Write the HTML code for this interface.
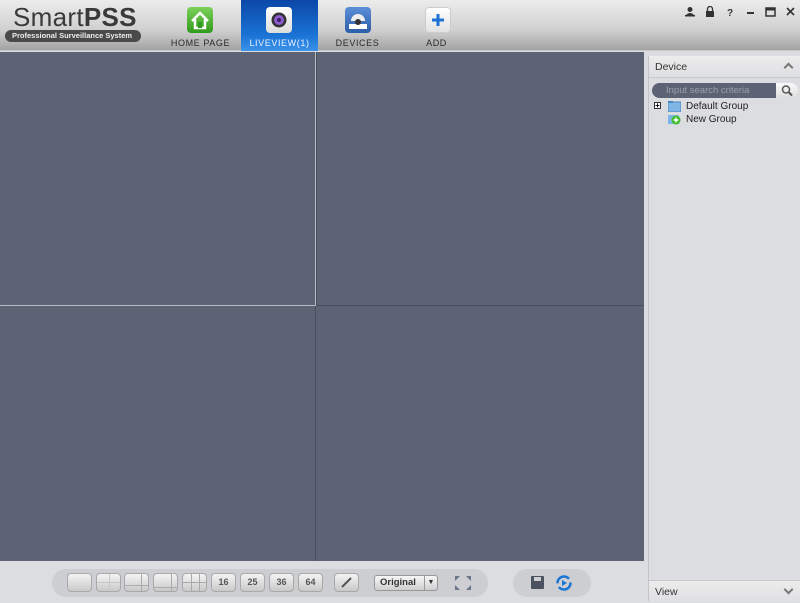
<!DOCTYPE html>
<html><head><meta charset="utf-8"><style>
*{margin:0;padding:0;box-sizing:border-box}
body{width:800px;height:601px;overflow:hidden;background:#dcdde0;font-family:"Liberation Sans","DejaVu Sans",sans-serif;position:relative}
.hdr{position:absolute;left:0;top:0;width:800px;height:51px;background:linear-gradient(#ececec,#d0d0d0 60%,#a2a2a2);border-bottom:1px solid #c8c8c8}
.logo{position:absolute;left:13px;top:2px;font-size:26px;color:#3a3a3a;letter-spacing:0.3px}
.logo b{font-weight:bold}
.badge{position:absolute;left:5px;top:30px;width:136px;height:12px;border-radius:6px;background:#4a4a4a;color:#eee;font-size:7.5px;font-weight:bold;line-height:12px;padding-left:7px}
.tab{position:absolute;top:0;height:51px;width:77px;text-align:center;font-size:9px;letter-spacing:0.6px;color:#2a2a2a}
.tab .lbl{position:absolute;left:0;right:0;top:38px}
.tab .ic{position:absolute;left:26px;top:7px;width:26px;height:26px;border-radius:4px}
.sel{background:linear-gradient(#0b47a8,#1b74d6 70%,#3d93ea);color:#e8f2ff}
.vid{position:absolute;left:0;top:52px;width:644px;height:509px;background:#5b6374}
.cell1{position:absolute;left:0;top:0;width:316px;height:254px;border:1px solid #b5bac4;border-left:none;border-top:none}
.vl{position:absolute;left:315px;top:254px;width:1px;height:255px;background:#4a5060}
.hl{position:absolute;left:316px;top:253px;width:328px;height:1px;background:#4a5060}
.vl2{position:absolute;left:316px;top:0;width:1px;height:254px;background:#4a5060}
.panel{position:absolute;left:648px;top:56px;width:152px;height:545px;border-left:1px solid #c4c5c8;background:#dcdde0}
.ph{height:22px;background:linear-gradient(#ececec,#dedfe2);border-bottom:1px solid #c8c9cc;font-size:10.5px;color:#333;line-height:22px;padding-left:6px;position:relative}
.chev{position:absolute;right:8px;top:8px;width:7px;height:7px;border-left:2px solid #777;border-top:2px solid #777;transform:rotate(45deg)}
.chevd{position:absolute;right:8px;top:5px;width:7px;height:7px;border-right:2px solid #777;border-bottom:2px solid #777;transform:rotate(45deg)}
.search{position:absolute;left:3px;top:27px;width:127px;height:15px;border-radius:8px 0 0 8px;background:#5b6374;color:#9aa1ad;font-size:9.5px;line-height:15px;padding-left:14px}
.sbtn{position:absolute;left:127px;top:27px;width:22px;height:15px;border-radius:0 8px 8px 0;background:linear-gradient(#fafafa,#ddd)}
.tree{position:absolute;font-size:10px;color:#222}
.bot{position:absolute;left:52px;top:569px;width:436px;height:28px;border-radius:14px;background:#cdced2}
.bot2{position:absolute;left:513px;top:569px;width:78px;height:28px;border-radius:14px;background:#cdced2}
.b{position:absolute;top:573px;width:25px;height:19px;border-radius:4px;background:linear-gradient(#f4f4f4,#c9c9c9);border:1px solid #a9a9a9;font-size:9px;font-weight:bold;color:#555;text-align:center;line-height:17px}
</style></head><body>
<div class="hdr">
 <div class="logo">Smart<b>PSS</b></div>
 <div class="badge">Professional Surveillance System</div>
 <div class="tab" style="left:162px"><div class="ic" style="left:25px;background:linear-gradient(#7ed15a,#2f9a1b)"><svg width="26" height="26"><path d="M5 14 L13 6 L21 14 M8 12 V21 H18 V12" fill="none" stroke="#fff" stroke-width="2.5"/><rect x="11" y="15" width="4" height="6" fill="#2f9a1b"/></svg></div><div class="lbl">HOME PAGE</div></div>
 <div class="tab sel" style="left:241px"><div class="ic" style="left:25px;background:linear-gradient(#fff,#ddd)"><svg width="26" height="26"><circle cx="13" cy="13" r="7.5" fill="#333"/><circle cx="13" cy="13" r="5" fill="#8e5bd0"/><circle cx="13" cy="13" r="2" fill="#3a1e66"/></svg></div><div class="lbl">LIVEVIEW(1)</div></div>
 <div class="tab" style="left:319px"><div class="ic" style="left:26px;background:linear-gradient(#5b8ed6,#2c5fa8)"><svg width="26" height="26"><path d="M6 14 A7 7 0 0 1 20 14 Z" fill="#eee"/><rect x="4" y="17" width="18" height="5" fill="#fff"/><circle cx="13" cy="15" r="3" fill="#333"/></svg></div><div class="lbl">DEVICES</div></div>
 <div class="tab" style="left:398px"><div class="ic" style="left:27px;background:linear-gradient(#fff,#e2e2e2);border:1px solid #ccc"><svg width="24" height="24"><path d="M12 6 V18 M6 12 H18" stroke="#1c72d3" stroke-width="3"/></svg></div><div class="lbl">ADD</div></div>
 <svg style="position:absolute;left:680px;top:6px" width="120" height="12">
  <circle cx="10" cy="3.5" r="2.5" fill="#333"/><path d="M6 9 Q10 5 14 9 Z" fill="#333"/><rect x="5" y="9" width="10" height="1.5" fill="#333"/>
  <rect x="26" y="5" width="8" height="6" fill="#333"/><path d="M27.5 5 V3 A2.5 2.5 0 0 1 32.5 3 V5" fill="none" stroke="#333" stroke-width="1.3"/>
  <text x="47" y="10" font-size="10" font-weight="bold" fill="#333" font-family="Liberation Sans">?</text>
  <rect x="67" y="6" width="7" height="2" fill="#333"/>
  <rect x="86" y="2" width="9" height="8" fill="none" stroke="#333" stroke-width="1.5"/><rect x="86" y="2" width="9" height="2.5" fill="#333"/>
  <path d="M107 2 L114 9 M114 2 L107 9" stroke="#333" stroke-width="1.6"/>
 </svg>
</div>
<div class="vid"><div class="cell1"></div><div class="vl2"></div><div class="vl"></div><div class="hl"></div></div>
<div class="panel">
 <div class="ph">Device<div class="chev"></div></div>
 <div class="search">Input search criteria</div>
 <div class="sbtn"><svg width="22" height="15"><circle cx="10" cy="6.5" r="3.5" fill="none" stroke="#555" stroke-width="1.5"/><path d="M12.5 9 L16 12.5" stroke="#555" stroke-width="2"/></svg></div>
 <div style="position:absolute;left:5px;top:46px;width:7px;height:7px;background:#fff;border:1px solid #333;font-size:8px;line-height:5px;text-align:center;font-weight:bold">+</div>
 <svg style="position:absolute;left:19px;top:45px" width="13" height="11"><rect x="0" y="1" width="13" height="10" fill="#7fb6e6" stroke="#4a88c8"/><rect x="0" y="0" width="5" height="2" fill="#4a88c8"/></svg>
 <div class="tree" style="left:37px;top:45px">Default Group</div>
 <svg style="position:absolute;left:19px;top:58px" width="13" height="11"><rect x="0" y="1" width="11" height="9" fill="#7fb6e6"/><circle cx="8" cy="6" r="4.5" fill="#3fbf2a"/><path d="M8 3.5 V8.5 M5.5 6 H10.5" stroke="#fff" stroke-width="1.5"/></svg>
 <div class="tree" style="left:37px;top:58px">New Group</div>
 <div class="ph" style="position:absolute;top:524px;left:0;width:151px;border-top:1px solid #c8c9cc;border-bottom:none">View<div class="chevd"></div></div>
</div>
<div class="bot"></div><div class="bot2"></div>
<div class="b" style="left:67px"></div>
<div class="b" style="left:96px;background:linear-gradient(#c9c9c9,#c9c9c9) 12px 0/1px 100% no-repeat,linear-gradient(#c9c9c9,#c9c9c9) 0 8px/100% 1px no-repeat,linear-gradient(#f4f4f4,#c9c9c9)"></div>
<div class="b" style="left:124px;background:linear-gradient(#aaa,#aaa) 16px 0/1px 100% no-repeat,linear-gradient(#aaa,#aaa) 0 11px/100% 1px no-repeat,linear-gradient(#f4f4f4,#c9c9c9)"></div>
<div class="b" style="left:153px;background:linear-gradient(#aaa,#aaa) 17px 0/1px 100% no-repeat,linear-gradient(#aaa,#aaa) 0 13px/100% 1px no-repeat,linear-gradient(#f4f4f4,#c9c9c9)"></div>
<div class="b" style="left:182px;background:linear-gradient(#aaa,#aaa) 8px 0/1px 100% no-repeat,linear-gradient(#aaa,#aaa) 16px 0/1px 100% no-repeat,linear-gradient(#aaa,#aaa) 0 8px/100% 1px no-repeat,linear-gradient(#f4f4f4,#c9c9c9)"></div>
<div class="b" style="left:211px">16</div>
<div class="b" style="left:240px">25</div>
<div class="b" style="left:269px">36</div>
<div class="b" style="left:298px">64</div>
<div class="b" style="left:334px"><svg width="23" height="17"><path d="M7 13 L16 4" stroke="#555" stroke-width="2"/></svg></div>
<div style="position:absolute;left:374px;top:575px;width:64px;height:16px;border:1px solid #999;border-radius:3px;background:linear-gradient(#f6f6f6,#cfcfcf);font-size:9.5px;font-weight:bold;color:#333;line-height:14px;padding-left:5px">Original<span style="position:absolute;right:0;top:0;width:13px;height:14px;border-left:1px solid #999;font-size:7px;text-align:center">▼</span></div>
<svg style="position:absolute;left:455px;top:576px" width="16" height="14"><g fill="#6a7588"><path d="M0 0H5L0 5Z"/><path d="M16 0H11L16 5Z"/><path d="M0 14H5L0 9Z"/><path d="M16 14H11L16 9Z"/></g></svg>
<svg style="position:absolute;left:531px;top:576px" width="14" height="14"><rect x="0" y="0" width="13" height="13" rx="1" fill="#4a5260"/><rect x="3" y="1" width="7" height="4" fill="#cdced2"/></svg>
<svg style="position:absolute;left:555px;top:574px" width="18" height="18"><circle cx="9" cy="9" r="6.5" fill="none" stroke="#1c76d6" stroke-width="2.5" stroke-dasharray="16 4"/><path d="M7 6 L12 9 L7 12Z" fill="#1c76d6"/></svg>
</body></html>
